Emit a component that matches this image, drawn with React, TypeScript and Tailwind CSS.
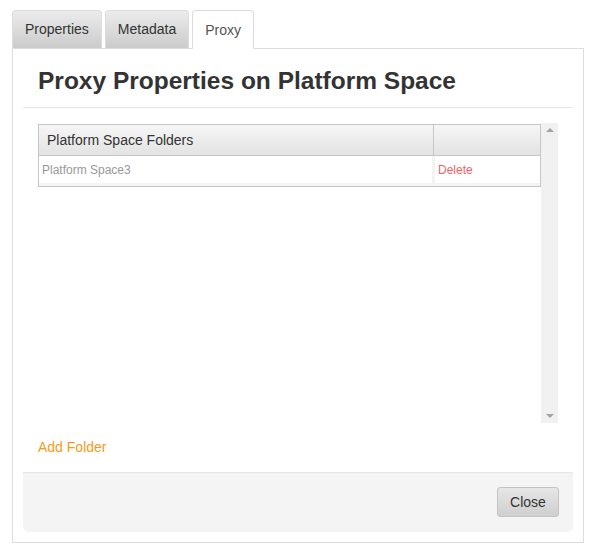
export default function App() {
  const tabs = ['Properties', 'Metadata', 'Proxy']
  return (
    <div className="w-[594px] h-[551px] bg-white pt-[10px] pl-[12px] font-['Liberation_Sans',Arial,sans-serif] text-[#333]">
      <div className="flex gap-[3px] h-[38px] relative z-10">
        {tabs.map(t =>
          t === 'Proxy' ? (
            <div key={t} className="h-[39px] px-[12px] flex items-center rounded-t-[4px] border border-b-0 border-[#ddd] bg-white text-[14px] text-[#555]">
              {t}
            </div>
          ) : (
            <div key={t} className="h-[38px] px-[12px] flex items-center rounded-t-[4px] border border-b-0 border-[#ddd] bg-gradient-to-b from-[#ececec] to-[#cbcbcb] text-[14px] text-[#333]">
              {t}
            </div>
          )
        )}
      </div>
      <div className="w-[572px] h-[495px] border border-[#ddd] px-[10px] pb-[10px] flex flex-col">
        <div className="flex flex-col flex-1">
          <div className="h-[59px] border-b border-[#e5e5e5] flex items-center pl-[15px] pt-[6px]">
            <h3 className="text-[24.5px] font-bold text-[#333]">Proxy Properties on Platform Space</h3>
          </div>
          <div className="flex-1 px-[15px] pt-[15px]">
            <div className="flex h-[300px]">
              <div className="flex-1 pt-px">
                <div className="border border-[#c6c6c6]">
                  <div className="flex h-[31px] bg-gradient-to-b from-[#f6f6f6] to-[#e3e3e3] border-b border-[#c6c6c6] text-[14px] text-[#333]">
                    <div className="flex-1 flex items-center pl-[8px] border-r border-[#c6c6c6]">Platform Space Folders</div>
                    <div className="w-[106px]" />
                  </div>
                  <div className="flex h-[30px] bg-white text-[12px] border-b-[3px] border-[#f3f3f3]">
                    <div className="flex-1 flex items-center pl-[3px] text-[#999] border-r-[3px] border-[#f3f3f3]">Platform Space3</div>
                    <div className="w-[105px] flex items-center pl-[3px] text-[#f0636a]">Delete</div>
                  </div>
                </div>
              </div>
              <div className="w-[17px] bg-[#f1f1f1] flex flex-col justify-between items-center py-[5px]">
                <div className="w-0 h-0 border-l-[4px] border-r-[4px] border-b-[4px] border-l-transparent border-r-transparent border-b-[#a3a3a3]" />
                <div className="w-0 h-0 border-l-[4px] border-r-[4px] border-t-[4px] border-l-transparent border-r-transparent border-t-[#a3a3a3]" />
              </div>
            </div>
            <div className="mt-[14px] text-[14px] text-[#f39b1a]">Add Folder</div>
          </div>
          <div className="h-[60px] border-t border-[#e5e5e5] bg-[#f4f4f4] rounded-b-[6px] flex justify-end items-start pt-[14px] pr-[14px]">
            <button className="h-[30px] w-[62px] rounded-[3px] border border-[#c4c4c4] bg-gradient-to-b from-[#e6e6e6] to-[#cfcfcf] text-[14px] text-[#333]">
              Close
            </button>
          </div>
        </div>
      </div>
    </div>
  )
}
